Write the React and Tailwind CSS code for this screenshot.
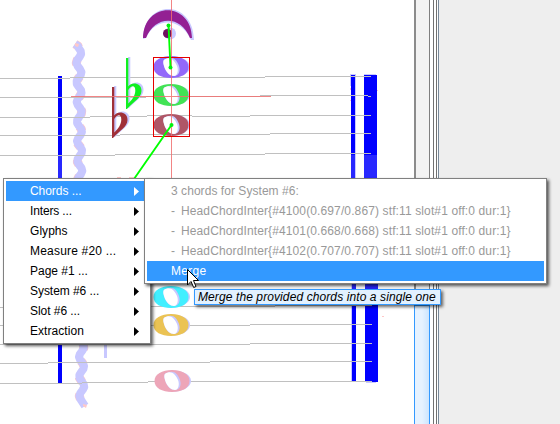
const items = [
  { label: 'Chords ...', spacing: 'tracking-[-0.05px]' },
  { label: 'Inters ...', spacing: 'tracking-[-0.15px]' },
  { label: 'Glyphs', spacing: 'tracking-[0.05px]' },
  { label: 'Measure #20 ...', spacing: 'tracking-[0.2px]' },
  { label: 'Page #1 ...', spacing: 'tracking-[-0.02px]' },
  { label: 'System #6 ...', spacing: 'tracking-[-0.05px]' },
  { label: 'Slot #6 ...', spacing: 'tracking-[-0.05px]' },
  { label: 'Extraction', spacing: 'tracking-[0.05px]' },
];

const chords = ['4100(0.697/0.867)', '4101(0.668/0.668)', '4102(0.707/0.707)'];

function Whole({ x, y, fill }) {
  return (
    <g transform={`translate(${x} ${y})`}>
      <ellipse cx="1" cy="0" rx="18" ry="10.500" fill="#c8c8ff" />
      <path fill={fill} d="M-17.500 0C-17.500-7-10-11 0-11S17.500-7 17.500 0 10 11 0 11-17.500 7-17.500 0Z" />
      <path fill="#c8c8ff" d="M-4-8.500C2-11 6-7 8-1S7 9 3 9-5 6-7-1-6-8-4-8.500Z" />
      <path fill="white" d="M-4-8.500C0-10 4-6 6-1S6 9 3 9-5 6-7-1-6-7.500-4-8.500Z" />
    </g>
  );
}

function Flat({ x, y, fill }) {
  const d = 'M0 0h2.300v28.500C5 24 15.500 24 15.500 33 15.500 40 7 44 1 51H0ZM2.300 32v13.500c4-4 7-8 7-13 0-6-4.500-5-7-.5Z';
  return (
    <g transform={`translate(${x} ${y})`} fillRule="evenodd">
      <path fill="#c8c8ff" d={d} transform="translate(2 -1)" />
      <path fill={fill} d={d} />
    </g>
  );
}

const wave = 'M75 44L78 46' + Array.from({ length: 118 }, (_, i) => {
  const y = 48 + i * 3;
  const x = 78.7 + (y - 48) * 0.009 + 2.5 * Math.cos(((y - 53) * 2 * Math.PI) / 19.6);
  return `L${x.toFixed(1)} ${y}`;
}).join('') + 'L83 403L85 406';

function Score() {
  return (
    <svg className="block h-[424px] w-[414px]" viewBox="0 0 414 424">
      <g fill="none" strokeLinejoin="round">
        <path stroke="#ffc8c8" strokeWidth="9" d={wave} strokeDasharray="5 14" />
        <path stroke="#c8c8ff" strokeWidth="8" d={wave} />
      </g>
      <path d="M75 43l4 1-1 3-3-1zM83 404l4 1-1 3-3-2z" fill="#ffc8c8" />
      <g shapeRendering="crispEdges">
        <path fill="#c8c8ff" d="M104 340h3v18h-3zM350 74h6v12h-6zM364 74h12v2h-12zM355 85h1v94h-1zM351 284h2v98h-2zM366 381h10v2h-10z" />
        <path fill="#0000ff" d="M58 76h4v307h-4zM351 75h4v80h-4zM364 75h13v80h-13zM352 305h4v76h-4zM365 305h13v77h-13z" />
        <path fill="#2828ff" d="M58 155h4v24h-4zM351 155h4v24h-4zM364 155h13v24h-13zM352 284h4v21h-4zM365 284h13v21h-13z" />
        <path fill="#ffc8c8" d="M350 88h1v2h-1zM350 100h1v1h-1zM377 90h1v1h-1zM382 316h2v1h-2zM117 177h4v2h-4zM129 177h5v2h-5z" />
      </g>
      <g fill="none" stroke="#c0c0c0" shapeRendering="crispEdges">
        <path d="M0 78.500H70M70 77.500H265M265 76.500H371M0 97.500H146M146 96.500H260M260 95.500H368M368 96.500H371M0 117.500H90M90 116.500H147M147 115.500H192M192 116.500H250M250 115.500H371M0 135.500H120M120 134.500H270M270 133.500H371M0 155.500H115M115 154.500H265M265 153.500H371" />
        <path d="M0 307.500H140M140 306.500H275M275 305.500H372M0 325.500H250M250 324.500H372M0 344.500H250M250 343.500H372M0 363.500H48M48 362.500H210M210 361.500H372M0 383.500H82M82 382.500H148M148 381.500H372" />
      </g>
      <Flat x={126} y={58} fill="#10f020" />
      <Flat x={112} y={87} fill="#a03038" />
      <Whole x={171} y={67} fill="#9368fa" />
      <Whole x={171} y={95} fill="#42e355" />
      <Whole x={171} y={125} fill="#af5667" />
      <Whole x={171} y={297} fill="#42efff" />
      <Whole x={171} y={325} fill="#ebc354" />
      <Whole x={172} y={381} fill="#eda5b8" />
      <path d="M143 39C144-1 193-1 194 40H191C181 17 155 17 146 38Z" fill="#c8c8ff" />
      <path d="M143 38C144 1 191 1 192 38H190C181 15 155 15 146 38Z" fill="#932093" />
      <circle cx="170" cy="33.500" r="6" fill="#c8c8ff" />
      <circle cx="167.500" cy="33.500" r="4.500" fill="#701060" />
      <g stroke="#f07070" strokeOpacity="0.85" shapeRendering="crispEdges">
        <path d="M171.500 0V179M71 96.500H271" />
      </g>
      <path d="M153.500 57.500H189.500V136.500H153.500Z" fill="none" stroke="#e60000" shapeRendering="crispEdges" />
      <g stroke="#00ff00" strokeWidth="1.9">
        <path d="M168.500 25L170.500 67.500M171.500 125L134 179" />
      </g>
      <g fill="#00f010">
        <circle cx="168.500" cy="25.500" r="2" />
        <circle cx="170.500" cy="67.500" r="2" />
        <circle cx="171.500" cy="125" r="2" />
      </g>
    </svg>
  );
}

function MenuItem({ label, active, spacing }) {
  return (
    <li className={`flex h-5 items-center justify-between pl-6 pr-[9px] ${spacing} ${active ? 'bg-[#3399ff] text-white' : 'text-black'}`}>
      <span className="whitespace-pre">{label}</span>
      <svg className="h-[9px] w-[5px]" viewBox="0 0 5 9"><path d="M0 0L5 4.500L0 9Z" fill="currentColor" /></svg>
    </li>
  );
}

export default function App() {
  return (
    <main className="relative h-[424px] w-[560px] overflow-hidden bg-white font-['Liberation_Sans',Arial,sans-serif] text-[12px] leading-5">
      <div className="flex h-full">
        <Score />
        <div className="flex w-4 flex-col">
          <div className="h-[305px] border-l-2 border-r border-l-[#8c8c8c] border-r-[#808080] bg-[#f3f3f3]" />
          <div className="grow border-x border-t border-[#3399ff] bg-gradient-to-r from-[#e6f2ff] via-[#e6f2ff] to-[#cce5ff]" />
        </div>
        <div className="w-[4px] border-r border-[#707070] bg-white" />
        <div className="w-[3px] border-r border-[#707070] bg-white" />
        <div className="w-[2px] border-r border-[#778899] bg-white" />
        <div className="grow bg-[#eeeeee]" />
      </div>

      <ul className="absolute left-[3px] top-[178px] w-[148px] border border-[#808080] bg-white p-[2px] shadow-[2px_2px_3px_rgba(0,0,0,0.65)]">
        {items.map(({ label, spacing }, i) => <MenuItem key={label} label={label} active={i === 0} spacing={spacing} />)}
      </ul>

      <ul className="absolute left-[144px] top-[178px] w-[403px] border border-[#808080] bg-white p-[2px] tracking-[0.12px] text-[#999999] shadow-[2px_2px_3px_rgba(0,0,0,0.65)]">
        <li className="h-5 pl-6 tracking-[0.05px]">3 chords for System #6:</li>
        {chords.map((id) => (
          <li key={id} className="flex h-5 whitespace-pre pl-6">
            <span className="w-[10px]">-</span>
            <span>{`HeadChordInter{#${id} stf:11 slot#1 off:0 dur:1}`}</span>
          </li>
        ))}
        <li className="h-5 bg-[#3399ff] pl-6 tracking-[0.3px] text-white">Merge</li>
      </ul>

      <div className="absolute left-[194px] top-[289px] h-4 w-[247px] whitespace-nowrap border border-[#3399ff] bg-[#e2f1ff] pl-[3px] italic leading-[14px] tracking-[0.1px] text-black shadow-[2px_2px_3px_rgba(0,0,0,0.6)]">
        Merge the provided chords into a single one
      </div>

      <svg className="absolute left-[187px] top-[269px] h-[20px] w-[13px]" viewBox="0 0 13 20">
        <path d="M.5.500V16L4 12.500L6.700 18.500L9 17.500L6.500 11.500H11.500Z" fill="white" stroke="black" />
      </svg>
    </main>
  );
}
